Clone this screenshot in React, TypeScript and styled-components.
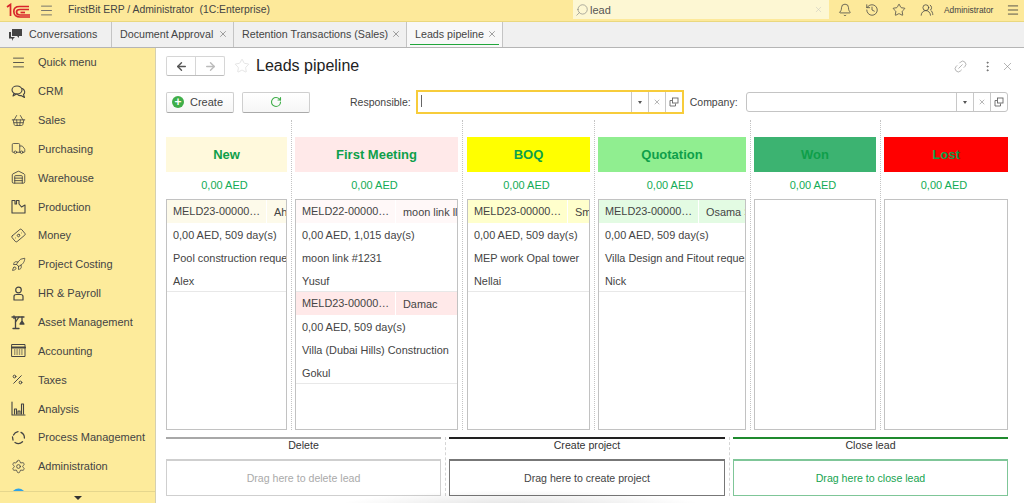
import React from "react";
import styled, { createGlobalStyle } from "styled-components";
import {
  ArrowLeft, ArrowRight, Bell, Banknote, Factory, History, Link2, Menu,
  MoreVertical, Percent, Rocket, RotateCw, Search, Settings, ShoppingBasket, Star, Truck,
  UsersRound, Warehouse, X,
} from "lucide-react";

const Global = createGlobalStyle`
  html, body { margin: 0; padding: 0; background: #fff; }
  * { box-sizing: border-box; }
  body { font-family: "Liberation Sans", Arial, sans-serif; font-size: 11px; color: #333; }
`;

const Page = styled.div`
  position: relative; width: 1024px; height: 503px; overflow: hidden;
  display: flex; flex-direction: column;
`;
const TopBar = styled.header`
  height: 22px; flex: none; background: #fde99a; border-bottom: 1px solid #ead87f;
  display: flex; align-items: flex-start;
`;
const LogoSlot = styled.div`width: 39px; height: 21px; padding: 3px 0 0 6px; flex: none;`;
const BurgerSlot = styled.div`width: 29px; height: 21px; display: flex; align-items: center; color: #666; flex: none;`;
const AppTitle = styled.div`
  width: 505px; line-height: 20px; font-size: 10.4px; color: #444; flex: none; white-space: pre;
`;
const SearchBox = styled.div`
  width: 256px; height: 19px; background: #fdf7d3; display: flex; align-items: center; padding: 0 6px 0 2px;
  flex: none; color: #555; font-size: 11px;
`;
const SearchText = styled.span`flex: 1; margin-left: 1px;`;
const TopIcons = styled.div`
  flex: 1; height: 20px; display: flex; align-items: center; color: #444; padding-left: 9px;
`;
const TopIcon = styled.span<{ $w: number }>`width: ${(p) => p.$w}px; flex: none; display: flex;`;
const UserName = styled.span`font-size: 8.4px; width: 62px; flex: none; color: #444;`;
const Turned = styled.span<{ $t: string }>`display: flex; transform: ${(p) => p.$t};`;

const TabsBar = styled.nav`
  height: 26px; flex: none; background: #f0f0f0; border-bottom: 1px solid #b5b5b5; display: flex;
`;
const Tab = styled.div<{ $w: number; $active?: boolean }>`
  position: relative; width: ${(p) => p.$w}px; flex: none; display: flex; align-items: center;
  padding: 0 5px 1px 8px; border-right: 1px solid #c4c4c4; font-size: 10.7px; color: #444;
  background: ${(p) => (p.$active ? "#f8f8f8" : "transparent")};
  ${(p) => p.$active && `&::after { content: ""; position: absolute; left: 3px; right: 3px; bottom: 2px; height: 1.5px; background: #21a63c; }`}
`;
const TabLabel = styled.span`flex: 1; white-space: nowrap;`;
const ConvIcon = styled.span`display: flex; width: 21px; color: #444; flex: none;`;

const Body = styled.div`flex: 1; min-height: 0; display: flex;`;
const Sidebar = styled.aside`
  width: 156px; flex: none; background: #fdeb9b; border-right: 1px solid #d5d0b0;
  display: flex; flex-direction: column;
`;
const SideList = styled.div`flex: 1; min-height: 0; overflow: hidden;`;
const SideItem = styled.div`
  height: 28.85px; display: flex; align-items: center; padding-left: 11px; color: #444; font-size: 11px;
`;
const SideIcon = styled.span`width: 27px; flex: none; display: flex; color: #444;`;
const SideFoot = styled.div`
  height: 12px; flex: none; border-top: 1px solid #e5d68d; background: #fdeb9b;
  display: flex; justify-content: center; align-items: center;
`;
const DownCaret = styled.span`
  width: 0; height: 0; border-left: 4px solid transparent; border-right: 4px solid transparent;
  border-top: 4px solid #333;
`;

const Main = styled.main`flex: 1; min-width: 0; display: flex; flex-direction: column; padding: 0 16px 7px 10px; background: #fff;`;
const TitleRow = styled.div`height: 36px; flex: none; display: flex; align-items: center;`;
const NavGroup = styled.div`
  width: 59px; height: 20px; display: flex; border: 1px solid #d6d6d6; border-bottom-color: #bdbdbd;
  border-radius: 2px; flex: none;
`;
const NavBtn = styled.span<{ $off?: boolean }>`
  flex: 1; display: flex; align-items: center; justify-content: center;
  color: ${(p) => (p.$off ? "#bbb" : "#555")};
  ${(p) => p.$off && "border-left: 1px solid #d6d6d6;"}
`;
const StarSlot = styled.span`margin-left: 9px; width: 22px; flex: none; display: flex; color: #d8d8d8;`;
const Title = styled.h1`margin: 0; font-size: 16px; font-weight: 400; color: #222; flex: 1;`;
const TitleTools = styled.div`display: flex; align-items: center; color: #999; width: 62px; flex: none; margin-right: -7px;`;
const ToolSlot = styled.span<{ $w: number; $c?: string }>`width: ${(p) => p.$w}px; flex: none; display: flex; color: ${(p) => p.$c ?? "#999"};`;

const Toolbar = styled.div`height: 36px; flex: none; display: flex; align-items: center;`;
const Button = styled.div<{ $center?: boolean }>`
  width: 68px; height: 21px; flex: none; display: flex; align-items: center; gap: 6px;
  justify-content: ${(p) => (p.$center ? "center" : "flex-start")};
  padding-left: ${(p) => (p.$center ? 0 : 5)}px;
  border: 1px solid #cfcfcf; border-bottom-color: #aaa; border-radius: 2px; background: linear-gradient(#fff, #f6f6f6);
  color: #444; font-size: 11px; margin-right: 8px;
`;
const FieldLabel = styled.label<{ $ml: number; $mr: number }>`margin-left: ${(p) => p.$ml}px; margin-right: ${(p) => p.$mr}px; font-size: 10.5px; color: #444; flex: none;`;
const Field = styled.div<{ $w: number; $focus?: boolean }>`
  width: ${(p) => p.$w}px; flex: none; display: flex; background: #fff;
  height: ${(p) => (p.$focus ? 24 : 20)}px;
  border: ${(p) => (p.$focus ? "2px solid #f7cc3b" : "1px solid #c4c4c4")};
  border-radius: ${(p) => (p.$focus ? 0 : 3)}px;
  margin-right: ${(p) => (p.$focus ? 6 : 0)}px;
`;
const FieldInput = styled.div`flex: 1; padding: 3px 0 0 3px;`;
const Cursor = styled.div`width: 1px; height: 12px; background: #666;`;
const FieldBtn = styled.span`
  width: 17px; flex: none; border-left: 1px solid #c8c8c8; display: flex; align-items: center; justify-content: center; color: #777;
`;
const SmallCaret = styled.span`
  width: 0; height: 0; border-left: 2.5px solid transparent; border-right: 2.5px solid transparent; border-top: 3px solid #555;
`;

const Board = styled.section`height: 310px; flex: none; display: flex;`;
const Column = styled.div<{ $w: number }>`width: ${(p) => p.$w}px; flex: none; display: flex; flex-direction: column; padding-top: 17px;`;
const ColHead = styled.div<{ $bg: string }>`
  height: 35px; flex: none; background: ${(p) => p.$bg}; color: #0e9f4a; font-size: 13px; font-weight: 700;
  display: flex; align-items: center; justify-content: center;
`;
const Amount = styled.div`height: 27px; flex: none; display: flex; align-items: center; justify-content: center; padding: 0 4px 2px 0; color: #13ab55; font-size: 11px;`;
const CardBox = styled.div`flex: 1; min-height: 0; border: 1px solid #c2c2c2; overflow: hidden; background: #fff;`;
const Sep = styled.div<{ $w: number }>`
  width: ${(p) => p.$w}px; flex: none; display: flex; justify-content: center;
  &::before { content: ""; border-left: 1px dotted #c4c4c4; }
`;
const Card = styled.article`height: 92px; border-bottom: 1px solid #e8e8e8; width: 100%;`;
const CardTop = styled.div<{ $bg: string }>`
  height: 23px; background: ${(p) => p.$bg}; display: flex; align-items: center; white-space: nowrap; overflow: hidden;
`;
const CardCode = styled.span`width: 100px; flex: none; padding-left: 6px; line-height: 23px; border-right: 1px solid #fff; font-size: 10.9px; color: #444;`;
const CardOwner = styled.span`padding-left: 7px; font-size: 10.9px; color: #444;`;
const CardRow = styled.div`height: 23px; line-height: 25px; padding-left: 6px; white-space: nowrap; overflow: hidden; font-size: 10.9px; color: #444;`;

const Drops = styled.section`margin-top: 7px; flex: 1; min-height: 0; display: grid; grid-template-columns: 275px 8px 276px 8px 275px;`;
const Drop = styled.div`display: flex; flex-direction: column;`;
const DropLine = styled.div<{ $c: string }>`height: 2px; flex: none; background: ${(p) => p.$c};`;
const DropLabel = styled.div`height: 20px; flex: none; display: flex; align-items: center; justify-content: center; color: #333; font-size: 10.6px; padding-bottom: 8px;`;
const DropZone = styled.div<{ $c: string; $tc: string }>`
  flex: 1; border: 1px solid ${(p) => p.$c}; border-top-width: 2px; color: ${(p) => p.$tc};
  display: flex; align-items: center; justify-content: center; font-size: 10.6px;
`;
const DropSep = styled.div`
  display: flex; justify-content: center;
  &::before { content: ""; border-left: 1px dashed #d5d5d5; }
`;
const BottomShade = styled.div`
  position: absolute; left: 330px; width: 380px; top: 490px; height: 26px; pointer-events: none;
  background: radial-gradient(ellipse at center 70%, rgba(0,0,0,.13), rgba(0,0,0,0) 70%);
`;
const GreenDisc = styled.span`
  width: 12px; height: 12px; border-radius: 50%; background: #3fae49; color: #fff;
  display: flex; align-items: center; justify-content: center; font-size: 12px; font-weight: 700; line-height: 12px;
`;

const Logo = () => (
  <svg width="25" height="15" viewBox="0 0 25 15" fill="none" stroke="#d8262c" strokeWidth="1.7">
    <path d="M1 4 L4.5 1.5 V13" />
    <path d="M23 6.5 H14 C11.5 6.5 10.5 8 10.5 9 C10.5 11 12 12 14 12 H24" />
    <path d="M23 3.5 H13.5 C9.5 3.5 7.8 6 7.8 8.5 C7.8 12 10.5 14 14 14 H24" />
    <path d="M19 9.5 H14.5" />
  </svg>
);
const Ico = ({ children, sw = 1.1 }: { children: React.ReactNode; sw?: number }) => (
  <svg width="15" height="15" viewBox="0 0 15 15" fill="none" stroke="#444" strokeWidth={sw} strokeLinejoin="round" strokeLinecap="round">
    {children}
  </svg>
);
const ChatIcon = () => (
  <Ico>
    <ellipse cx="6" cy="6" rx="5" ry="4" />
    <path d="M3 9.5 L2 12 L5.5 10" />
    <path d="M11.5 4.5 C14 6 14.5 9 12.5 10.5 L13.5 13.5 L10 11.5 C8.5 11.8 7 11.2 6.5 10.2" />
  </Ico>
);
const CraneIcon = () => (
  <Ico sw={1.3}>
    <path d="M1 2 H13 M3 1 V3.5 M4.5 2 V13.5 M2 13.5 H8" />
    <path d="M4.5 7 L8 2" />
    <path d="M11 2 V6 M9 9 L11 6 L13 9 Z" fill="#444" />
  </Ico>
);
const AccountingIcon = () => (
  <Ico sw={1}>
    <rect x="1" y="1.5" width="13" height="12" />
    <path d="M1 4.5 H14" strokeWidth="2" />
    <path d="M3 7 H12 M3 9 H12 M3 11 H12" strokeDasharray="1.4 1" strokeLinecap="butt" />
  </Ico>
);
const ProductionIcon = () => (
  <Ico>
    <path d="M1 14 V1.5 H4 V5 H5.5 V1.5 H8 V5 L10.5 8 L14 6 V14 Z" />
  </Ico>
);
const PersonIcon = () => (
  <Ico sw={1.2}>
    <circle cx="7.5" cy="4" r="2.8" />
    <path d="M3 14 V10.5 C3 9 4 8.5 5.5 8.5 H9.5 C11 8.5 12 9 12 10.5 V14 Z" />
  </Ico>
);
const BarsIcon = () => (
  <Ico>
    <path d="M1 1 V14 H14" />
    <path d="M3.5 13 V8 H5.5 V13 M7 13 V10 H9 V13 M10.5 13 V3 H12.5 V13" />
  </Ico>
);
const CycleIcon = () => (
  <Ico sw={1.3}>
    <path d="M2.5 5 A6 6 0 0 1 7 1.6" />
    <path d="M10 2.4 A6 6 0 0 1 13.4 8" />
    <path d="M11.5 11.8 A6 6 0 0 1 4 12.5" />
    <path d="M2 10 L1.5 7" />
  </Ico>
);
const CopyGlyph = () => (
  <svg width="10" height="10" viewBox="0 0 10 10" fill="none" stroke="#666" strokeWidth="0.9">
    <rect x="3.5" y="1" width="5.5" height="5" />
    <path d="M3 3.5 H1 V9 H6.5 V6.5" />
  </svg>
);

const menu: [string, React.ReactNode][] = [
  ["Quick menu", <Menu size={15} strokeWidth={1.4} />],
  ["CRM", <ChatIcon />],
  ["Sales", <ShoppingBasket size={15} strokeWidth={1.3} />],
  ["Purchasing", <Truck size={15} strokeWidth={1.3} />],
  ["Warehouse", <Warehouse size={15} strokeWidth={1.4} />],
  ["Production", <ProductionIcon />],
  ["Money", <Turned $t="rotate(-40deg)"><Banknote size={15} strokeWidth={1.3} /></Turned>],
  ["Project Costing", <Rocket size={15} strokeWidth={1.3} />],
  ["HR & Payroll", <PersonIcon />],
  ["Asset Management", <CraneIcon />],
  ["Accounting", <AccountingIcon />],
  ["Taxes", <Percent size={13} strokeWidth={1.8} />],
  ["Analysis", <BarsIcon />],
  ["Process Management", <CycleIcon />],
  ["Administration", <Settings size={15} strokeWidth={1.3} />],
  ["Extras", <svg width="15" height="15" viewBox="0 0 15 15"><circle cx="7.5" cy="7.5" r="7" fill="#2fa4e7" /></svg>],
];

type CardData = { code: string; owner: string; bg: string; amount: string; title: string; person: string };
type Col = { name: string; bg: string; w: number; sep?: number; cards: CardData[] };
const columns: Col[] = [
  { name: "New", bg: "#fff9dc", w: 121, sep: 8, cards: [
    { code: "MELD23-00000…", owner: "Ahmed", bg: "#fdfaea", amount: "0,00 AED, 509 day(s)", title: "Pool construction request", person: "Alex" },
  ] },
  { name: "First Meeting", bg: "#ffe9e9", w: 163, sep: 9, cards: [
    { code: "MELD22-00000…", owner: "moon link llc", bg: "#fff8f8", amount: "0,00 AED, 1,015 day(s)", title: "moon link #1231", person: "Yusuf" },
    { code: "MELD23-00000…", owner: "Damac", bg: "#ffe9e9", amount: "0,00 AED, 509 day(s)", title: "Villa (Dubai Hills) Construction", person: "Gokul" },
  ] },
  { name: "BOQ", bg: "#ffff00", w: 123, sep: 8, cards: [
    { code: "MELD23-00000…", owner: "Smith", bg: "#ffffcc", amount: "0,00 AED, 509 day(s)", title: "MEP work Opal tower", person: "Nellai" },
  ] },
  { name: "Quotation", bg: "#90ee90", w: 148, sep: 8, cards: [
    { code: "MELD23-00000…", owner: "Osama Saleh", bg: "#e3fbe3", amount: "0,00 AED, 509 day(s)", title: "Villa Design and Fitout request", person: "Nick" },
  ] },
  { name: "Won", bg: "#3cb371", w: 122, sep: 8, cards: [] },
  { name: "Lost", bg: "#ff0000", w: 124, cards: [] },
];

const FieldButtons = () => (
  <>
    <FieldBtn><SmallCaret /></FieldBtn>
    <FieldBtn><X size={8} strokeWidth={1.6} /></FieldBtn>
    <FieldBtn><CopyGlyph /></FieldBtn>
  </>
);

export default function App() {
  return (
    <Page>
      <Global />
      <TopBar>
        <LogoSlot><Logo /></LogoSlot>
        <BurgerSlot><Menu size={15} strokeWidth={1.4} /></BurgerSlot>
        <AppTitle>FirstBit ERP / Administrator  (1C:Enterprise)</AppTitle>
        <SearchBox>
          <Turned $t="scaleX(-1)"><Search size={14} strokeWidth={1} color="#777" /></Turned>
          <SearchText>lead</SearchText>
          <X size={9} strokeWidth={1.4} color="#c8c8c0" />
        </SearchBox>
        <TopIcons>
          <TopIcon $w={27}><Bell size={14} strokeWidth={1.3} /></TopIcon>
          <TopIcon $w={27}><History size={14} strokeWidth={1.3} /></TopIcon>
          <TopIcon $w={28}><Star size={14} strokeWidth={1.3} /></TopIcon>
          <TopIcon $w={24}><UsersRound size={14} strokeWidth={1.3} /></TopIcon>
          <UserName>Administrator</UserName>
          <TopIcon $w={14}><Menu size={14} strokeWidth={1.5} /></TopIcon>
        </TopIcons>
      </TopBar>
      <TabsBar>
        <Tab $w={112}>
          <ConvIcon><ChatBubble /></ConvIcon>
          <TabLabel>Conversations</TabLabel>
        </Tab>
        <Tab $w={122}><TabLabel>Document Approval</TabLabel><X size={10} strokeWidth={1.3} color="#555" /></Tab>
        <Tab $w={173}><TabLabel>Retention Transactions (Sales)</TabLabel><X size={10} strokeWidth={1.3} color="#555" /></Tab>
        <Tab $w={96} $active><TabLabel>Leads pipeline</TabLabel><X size={10} strokeWidth={1.3} color="#555" /></Tab>
      </TabsBar>
      <Body>
        <Sidebar>
          <SideList>
            {menu.map(([label, icon]) => (
              <SideItem key={label}><SideIcon>{icon}</SideIcon>{label}</SideItem>
            ))}
          </SideList>
          <SideFoot><DownCaret /></SideFoot>
        </Sidebar>
        <Main>
          <TitleRow>
            <NavGroup>
              <NavBtn><ArrowLeft size={13} strokeWidth={2.6} /></NavBtn>
              <NavBtn $off><ArrowRight size={13} strokeWidth={2.6} /></NavBtn>
            </NavGroup>
            <StarSlot><Star size={16} strokeWidth={1} /></StarSlot>
            <Title>Leads pipeline</Title>
            <TitleTools>
              <ToolSlot $w={28}><Turned $t="rotate(-45deg)"><Link2 size={15} strokeWidth={1.1} /></Turned></ToolSlot>
              <ToolSlot $w={20} $c="#666"><MoreVertical size={13} strokeWidth={1.6} /></ToolSlot>
              <ToolSlot $w={14} $c="#777"><X size={13} strokeWidth={1} /></ToolSlot>
            </TitleTools>
          </TitleRow>
          <Toolbar>
            <Button><GreenDisc>+</GreenDisc>Create</Button>
            <Button $center><RotateCw size={12} strokeWidth={2.2} color="#3fae49" /></Button>
            <FieldLabel $ml={32} $mr={5}>Responsible:</FieldLabel>
            <Field $w={268} $focus>
              <FieldInput><Cursor /></FieldInput>
              <FieldButtons />
            </Field>
            <FieldLabel $ml={0} $mr={8}>Company:</FieldLabel>
            <Field $w={262}>
              <FieldInput />
              <FieldButtons />
            </Field>
          </Toolbar>
          <Board>
            {columns.map((c) => (
              <React.Fragment key={c.name}>
                <Column $w={c.w}>
                  <ColHead $bg={c.bg}>{c.name}</ColHead>
                  <Amount>0,00 AED</Amount>
                  <CardBox>
                    {c.cards.map((k) => (
                      <Card key={k.owner}>
                        <CardTop $bg={k.bg}>
                          <CardCode>{k.code}</CardCode>
                          <CardOwner>{k.owner}</CardOwner>
                        </CardTop>
                        <CardRow>{k.amount}</CardRow>
                        <CardRow>{k.title}</CardRow>
                        <CardRow>{k.person}</CardRow>
                      </Card>
                    ))}
                  </CardBox>
                </Column>
                {c.sep ? <Sep $w={c.sep} /> : null}
              </React.Fragment>
            ))}
          </Board>
          <Drops>
            <Drop>
              <DropLine $c="#a8a8a8" />
              <DropLabel>Delete</DropLabel>
              <DropZone $c="#cfcfcf" $tc="#aaa">Drag here to delete lead</DropZone>
            </Drop>
            <DropSep />
            <Drop>
              <DropLine $c="#222" />
              <DropLabel>Create project</DropLabel>
              <DropZone $c="#777" $tc="#444">Drag here to create project</DropZone>
            </Drop>
            <DropSep />
            <Drop>
              <DropLine $c="#1f8a2e" />
              <DropLabel>Close lead</DropLabel>
              <DropZone $c="#7fc698" $tc="#16a34f">Drag here to close lead</DropZone>
            </Drop>
          </Drops>
        </Main>
      </Body>
      <BottomShade />
    </Page>
  );
}

function ChatBubble() {
  return (
    <svg width="15" height="15" viewBox="0 0 15 15" fill="#444">
      <path d="M4 2 H14 V9 H11 V11 L9 9 H4 Z" />
      <path d="M1 5 H3 V10 H7 L5 12 L4 14 V11.5 H1 Z" />
    </svg>
  );
}
